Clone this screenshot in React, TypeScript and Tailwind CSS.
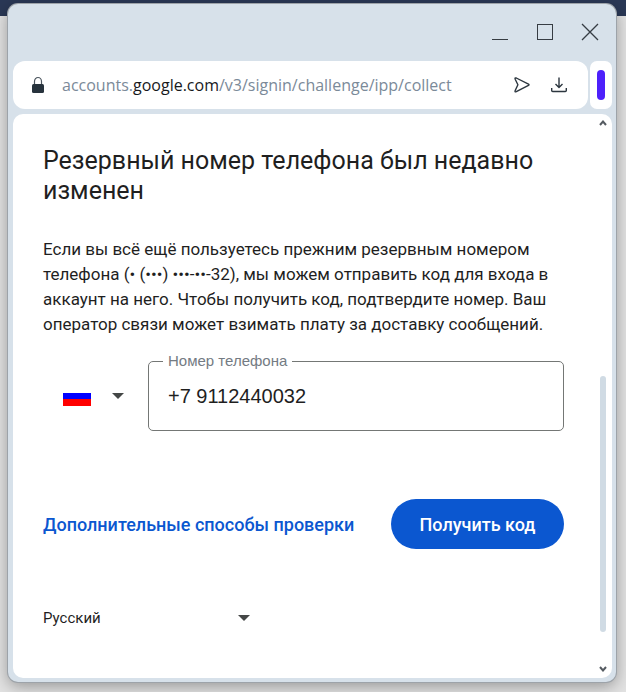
import { useState } from "react";

function TitleBar() {
  const button = "flex h-8 w-[45px] items-center justify-center text-[#363c43]";
  return (
    <header className="flex h-[57px] items-center justify-end pb-[2px]">
      <button type="button" aria-label="Свернуть" className={button}>
        <svg width="18" height="18" viewBox="0 0 18 18" fill="none" stroke="currentColor" shapeRendering="crispEdges">
          <path d="M1 16.5h16" />
        </svg>
      </button>
      <button type="button" aria-label="Развернуть" className={button}>
        <svg width="18" height="18" viewBox="0 0 18 18" fill="none" stroke="currentColor" shapeRendering="crispEdges">
          <path d="M1.500 1.500h15v15h-15z" />
        </svg>
      </button>
      <button type="button" aria-label="Закрыть" className={button}>
        <svg width="18" height="18" viewBox="0 0 18 18" fill="none" stroke="currentColor" strokeWidth="1.300">
          <path d="M1 1l16 16M17 1L1 17" />
        </svg>
      </button>
    </header>
  );
}

function AddressBar() {
  return (
    <div className="flex h-12 gap-[2px]">
      <div className="flex min-w-0 flex-1 items-center rounded-[12px] bg-white pr-5 pl-[18px]">
        <svg width="14" height="18" viewBox="0 0 14 18" className="mr-[17px] shrink-0">
          <path d="M3.500 8V5.500a3.500 4 0 0 1 7 0V8" fill="none" stroke="#4a545d" strokeWidth="1.200" />
          <rect x="1" y="8" width="12" height="9" rx="1.500" fill="#27333d" />
        </svg>
        <p className="min-w-0 flex-1 truncate font-['Open_Sans','Noto_Sans',sans-serif] text-[16px] text-[#7b8a99]">
          accounts.<span className="text-[#17191c]">google.com</span>/v3/signin/challenge/ipp/collect
        </p>
        <button type="button" aria-label="Отправить" className="mr-[19px] text-[#2c363f]">
          <svg width="18" height="18" viewBox="0 0 18 18" fill="none" stroke="currentColor" strokeWidth="1.400" strokeLinejoin="round">
            <path d="M2.200 3.200Q1.500 1.400 3.300 2L15.500 8.200Q16.500 8.800 15.500 9.400L3.300 15.700Q1.500 16.300 2.200 14.500L4.900 8.800z" />
          </svg>
        </button>
        <button type="button" aria-label="Загрузки" className="text-[#2c363f]">
          <svg width="18" height="18" viewBox="0 0 18 18" fill="none" stroke="currentColor" strokeWidth="1.400" strokeLinejoin="round">
            <path d="M9 1.500v9.500M5.500 8L9 11.500 12.500 8M1.700 12v2.500q0 1 1 1h12.600q1 0 1-1V12" />
          </svg>
        </button>
      </div>
      <button type="button" aria-label="Боковая панель" className="flex w-[22px] items-center justify-center rounded-[7px] bg-white">
        <span className="h-[30px] w-2 rounded-full bg-[#4d20fb]" />
      </button>
    </div>
  );
}

function ScrollBar() {
  return (
    <div aria-hidden="true" className="flex w-[13px] flex-col items-center py-[6px] pr-[5px]">
      <svg width="8" height="6" viewBox="0 0 8 6" fill="none" stroke="#555b61" strokeWidth="2">
        <path d="M1 5l3-3.500L7 5" />
      </svg>
      <div className="flex flex-1 flex-col">
        <div className="flex-[250]" />
        <div className="w-[6px] flex-[256] rounded-full bg-[#d0dbe4]" />
        <div className="flex-[34]" />
      </div>
      <svg width="8" height="6" viewBox="0 0 8 6" fill="none" stroke="#555b61" strokeWidth="2">
        <path d="M1 1l3 3.500L7 1" />
      </svg>
    </div>
  );
}

function Caret() {
  return (
    <svg width="12" height="6" viewBox="0 0 12 6" fill="#444746" className="pointer-events-none shrink-0">
      <path d="M0 0h12L6 6z" />
    </svg>
  );
}

export default function App() {
  const [phone, setPhone] = useState("+7 9112440032");
  return (
    <div className="min-h-screen bg-[linear-gradient(to_bottom,#2a3856_16px,#e2e2e2_16px)] pt-1 pr-[10px] pb-[10px] pl-2">
      <div className="flex min-h-[calc(100vh-14px)] flex-col rounded-[10px] bg-[#d7e1ea] pr-1 pb-1 pl-[5px] shadow-[0_0_0_1px_#9da3a9,0_4px_16px_rgba(0,0,0,0.35)]">
        <TitleBar />
        <AddressBar />
        <div className="mt-[5px] flex flex-1 rounded-[10px] bg-white">
          <main className="min-w-0 flex-1 pr-[35px] pl-[30px] font-['Roboto',sans-serif] text-[#1f1f1f]">
            <h1 className="pt-[32px] text-[25px] leading-[30px]">
              Резервный номер телефона был недавно изменен
            </h1>
            <p className="mt-[31px] text-[17px] leading-[25px]">
              Если вы всё ещё пользуетесь прежним резервным номером телефона (• (•••) •••-••-32), мы можем отправить код для входа в аккаунт на него. Чтобы получить код, подтвердите номер. Ваш оператор связи может взимать плату за доставку сообщений.
            </p>
            <form onSubmit={(event) => event.preventDefault()}>
              <div className="mt-4 flex">
                <div className="relative mt-2 flex h-[70px] w-[105px] shrink-0 items-center pl-5">
                  <span aria-hidden="true" className="flex h-5 w-7 flex-col">
                    <span className="flex-1 bg-white" />
                    <span className="flex-1 bg-[#0000ff]" />
                    <span className="flex-1 bg-[#ff0000]" />
                  </span>
                  <span className="ml-[21px]">
                    <Caret />
                  </span>
                  <select aria-label="Страна" className="absolute inset-0 cursor-pointer appearance-none opacity-0">
                    <option>Россия (+7)</option>
                  </select>
                </div>
                <fieldset className="h-[78px] min-w-0 flex-1 rounded-[5px] border border-[#747775] font-['Liberation_Sans',Arial,sans-serif]">
                  <legend className="ml-[14px] px-[5px] text-[15px] leading-4 text-[#747b83]">
                    <label htmlFor="phone">Номер телефона</label>
                  </legend>
                  <input
                    id="phone"
                    type="tel"
                    value={phone}
                    onChange={(event) => setPhone(event.target.value)}
                    className="h-[54px] w-full px-[19px] text-[20px] outline-none"
                  />
                </fieldset>
              </div>
              <div className="mt-[68px] flex items-center justify-between text-[18px] font-medium">
                <a href="#methods" className="text-[#0b57d0]">
                  Дополнительные способы проверки
                </a>
                <button type="submit" className="h-[50px] w-[173px] rounded-full bg-[#0b57d0] text-white">
                  Получить код
                </button>
              </div>
            </form>
            <div className="relative mt-[57px] flex w-[207px] items-center">
              <select aria-label="Язык" className="h-6 w-full cursor-pointer appearance-none text-[15px]">
                <option>Русский</option>
              </select>
              <span className="pointer-events-none absolute right-0">
                <Caret />
              </span>
            </div>
          </main>
          <ScrollBar />
        </div>
      </div>
    </div>
  );
}
